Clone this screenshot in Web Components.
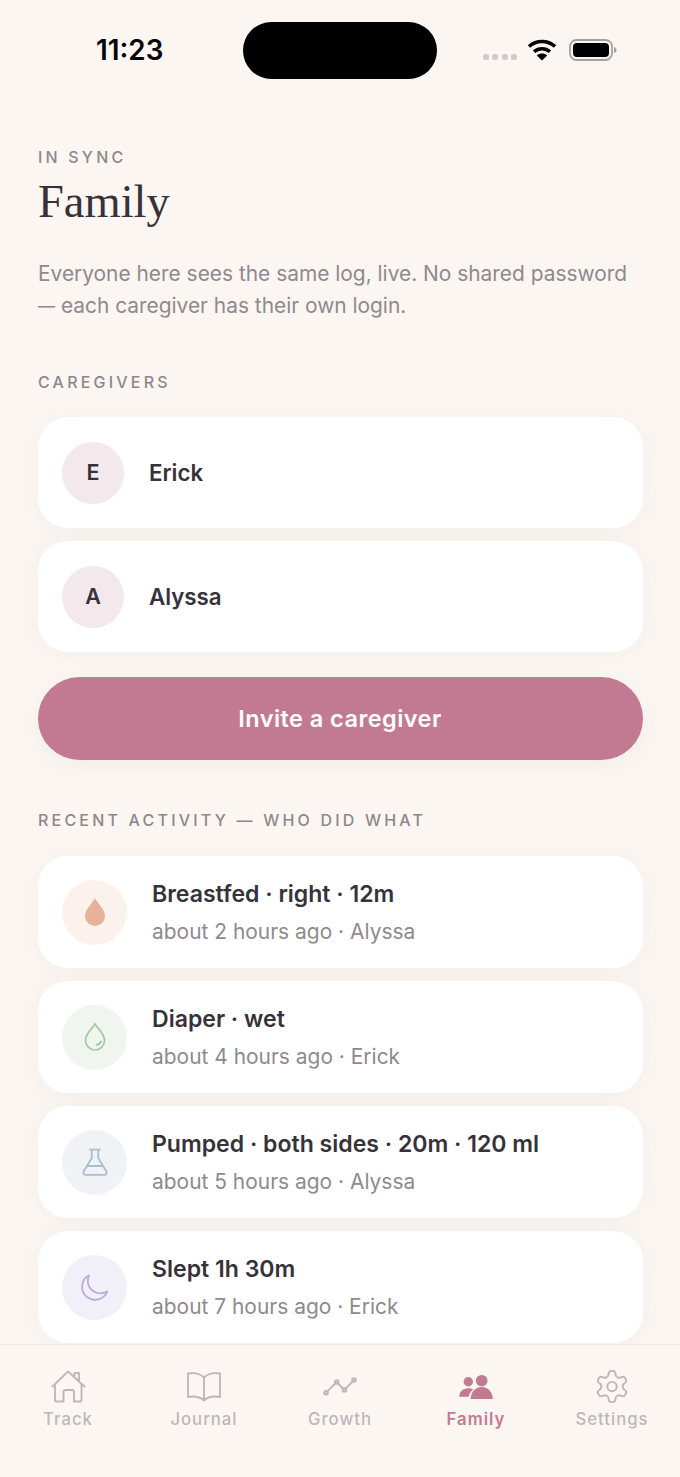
<!DOCTYPE html>
<html lang="en"><head><meta charset="utf-8"><title>Family</title>
<style>
html,body{margin:0;padding:0;background:#fbf6f2}
body{width:680px;height:1477px;overflow:hidden;font-family:Inter,"Liberation Sans",sans-serif;color:#37323a}
</style></head>
<body>
<x-app>
  <x-status slot="status"></x-status>
  <x-label>IN SYNC</x-label>
  <x-title>Family</x-title>
  <x-para>Everyone here sees the same log, live. No shared password <span style="font-size:17px;vertical-align:1.500px;line-height:1">—</span> each caregiver has their own login.</x-para>
  <x-label style="margin-top:50px">CAREGIVERS</x-label>
  <x-stack style="margin-top:25px">
    <x-caregiver initial="E">Erick</x-caregiver>
    <x-caregiver initial="A">Alyssa</x-caregiver>
  </x-stack>
  <x-button>Invite a caregiver</x-button>
  <x-label style="margin-top:50px">RECENT ACTIVITY — WHO DID WHAT</x-label>
  <x-stack style="margin-top:26px">
    <x-activity kind="feed" sub="about 2 hours ago · Alyssa">Breastfed · right · 12m</x-activity>
    <x-activity kind="diaper" sub="about 4 hours ago · Erick">Diaper · wet</x-activity>
    <x-activity kind="pump" sub="about 5 hours ago · Alyssa">Pumped · both sides · 20m · 120 ml</x-activity>
    <x-activity kind="sleep" sub="about 7 hours ago · Erick">Slept 1h 30m</x-activity>
  </x-stack>
  <x-tabs slot="tabs">
    <x-tab icon="home">Track</x-tab>
    <x-tab icon="book">Journal</x-tab>
    <x-tab icon="growth">Growth</x-tab>
    <x-tab icon="family" active>Family</x-tab>
    <x-tab icon="gear">Settings</x-tab>
  </x-tabs>
</x-app>
<script>
function def(name, html, init){
  customElements.define(name, class extends HTMLElement{
    constructor(){super();this.attachShadow({mode:'open'}).innerHTML=html;}
    connectedCallback(){ if(init) init.call(this,this.shadowRoot); }
  });
}
def('x-app',`<style>
:host{display:flex;flex-direction:column;width:680px;height:1477px;overflow:hidden}
.main{flex:1;min-height:0;overflow:hidden;padding:47px 37.5px 0;display:flex;flex-direction:column;box-sizing:border-box}
</style><slot name="status"></slot><div class="main"><slot></slot></div><slot name="tabs"></slot>`);
def('x-status',`<style>
:host{display:flex;align-items:center;height:100px;padding:0 63px 0 96px;box-sizing:border-box;flex:none}
.t{font:600 27.800px/1 Inter,"Liberation Sans",sans-serif;color:#050505;width:147px;margin-top:1px}
.i{width:194px;height:57px;background:#000;border-radius:29px;flex:none;margin-left:1px}
.r{display:flex;align-items:center;margin-left:46px}
.d{display:flex;gap:3.500px;margin-top:13px;margin-right:10px}
.d i{width:6px;height:6px;border-radius:2px;background:#cfcbc8;display:block}
svg{display:block}
</style><div class="t">11:23</div><div class="i"></div>
<div class="r"><div class="d"><i></i><i></i><i></i><i></i></div>
<svg width="30" height="22" viewBox="0 0 30 22"><path d="M2 7.500C9.500 .8 20.500 .8 28 7.500" fill="none" stroke="#000" stroke-width="3.600"/><path d="M7 12.600C11.500 8.700 18.500 8.700 23 12.600" fill="none" stroke="#000" stroke-width="3.400"/><path d="M15 21.500 9.800 16.400C12.800 13.800 17.200 13.800 20.200 16.400Z" fill="#000"/></svg>
<svg style="margin-left:12px" width="48" height="24" viewBox="0 0 48 24"><rect x="1" y="2" width="42" height="20" rx="6.500" fill="none" stroke="#a5a19e" stroke-width="1.800"/><rect x="4" y="5" width="36" height="14" rx="4" fill="#000"/><path d="M45 9c2 .5 2.500 1.500 2.500 3s-.5 2.500-2.500 3z" fill="#a5a19e"/></svg>
</div>`);
def('x-label',`<style>:host{display:block;font:500 16px/20px Inter,"Liberation Sans",sans-serif;letter-spacing:3.200px;color:#8d878c;flex:none;padding-left:.5px}</style><slot></slot>`);
def('x-title',`<style>:host{display:block;font:400 46.500px/56px "Liberation Serif",serif;color:#37323a;margin-top:7px;flex:none;padding-left:.5px}</style><slot></slot>`);
def('x-para',`<style>:host{display:block;font:400 20.900px/32px Inter,"Liberation Sans",sans-serif;color:#8f898d;margin-top:28px;flex:none;width:600px;padding-left:.5px}</style><slot></slot>`);
def('x-stack',`<style>:host{display:flex;flex-direction:column;gap:13px;flex:none}</style><slot></slot>`);
const cardCss=`background:#fff;border-radius:30px;box-shadow:0 3px 24px rgba(120,90,70,.05);box-sizing:border-box;display:flex;align-items:center;flex:none;`;
def('x-caregiver',`<style>
:host{${cardCss}height:111px;padding:0 24.500px;gap:25px}
.a{width:62px;height:62px;border-radius:50%;background:#f3e8ec;display:flex;align-items:center;justify-content:center;font:600 21.500px/1 Inter,"Liberation Sans",sans-serif;color:#37323a;flex:none}
.n{font:600 22.300px/1 Inter,"Liberation Sans",sans-serif;color:#37323a;margin-top:1px}
</style><div class="a"></div><div class="n"><slot></slot></div>`,function(r){r.querySelector('.a').textContent=this.getAttribute('initial')});
def('x-button',`<style>
:host{display:flex;align-items:center;justify-content:center;height:83px;border-radius:42px;background:#c27a92;color:#fff;font:600 23.500px/1 Inter,"Liberation Sans",sans-serif;letter-spacing:.45px;margin-top:25px;flex:none;box-shadow:0 6px 22px rgba(120,90,70,.06)}
span{margin-top:1px}
</style><span><slot></slot></span>`);
const kinds={
 feed:['#fbf2ee','<path d="M17 3C20 9 27 14 27 21a10 10 0 0 1-20 0C7 14 14 9 17 3Z" fill="#e6b299"/>'],
 diaper:['#f0f5f0','<path d="M17 4C20 9 26.500 13.500 26.500 20.500a9.500 9.500 0 0 1-19 0C7.500 13.500 14 9 17 4Z" fill="none" stroke="#a5c6a4" stroke-width="1.700"/><path d="M18.500 25c2-.3 3.500-1.500 4.500-3.500" fill="none" stroke="#a5c6a4" stroke-width="1.700" stroke-linecap="round"/>'],
 pump:['#f0f2f6','<path d="M12 4.700h10M13.800 5v8L5.600 26.500c-.8 1.700.2 3.300 2 3.300h18.800c1.800 0 2.800-1.600 2-3.300L20.200 13V5M9.500 21h15" fill="none" stroke="#a8bcd2" stroke-width="1.800" stroke-linecap="round" stroke-linejoin="round"/>'],
 sleep:['#f1eff8','<path d="M11 5.300A13 13 0 1 0 29.300 21.300 12.600 12.600 0 0 1 11 5.300Z" fill="none" stroke="#bcaadb" stroke-width="1.800" stroke-linejoin="round"/>']
};
def('x-activity',`<style>
:host{${cardCss}height:112px;padding:0 24.500px;gap:25px}
.a{width:65px;height:65px;border-radius:50%;display:flex;align-items:center;justify-content:center;flex:none}
.c{padding-top:2px}
.t{font:600 23.050px/28px Inter,"Liberation Sans",sans-serif;color:#37323a;white-space:nowrap}
.s{font:400 20.950px/28px Inter,"Liberation Sans",sans-serif;color:#8f898d;margin-top:10px;white-space:nowrap}
svg{display:block}
</style><div class="a"><svg width="34" height="34" viewBox="0 0 34 34"></svg></div><div class="c"><div class="t"><slot></slot></div><div class="s"></div></div>`,function(r){
 const k=kinds[this.getAttribute('kind')];r.querySelector('.a').style.background=k[0];r.querySelector('svg').innerHTML=k[1];r.querySelector('.s').textContent=this.getAttribute('sub');});
def('x-tabs',`<style>
:host{display:grid;grid-template-columns:repeat(5,1fr);height:133px;border-top:1px solid #efe9e5;background:#fbf6f2;flex:none;box-sizing:border-box;padding-top:25px;align-items:start;position:relative;z-index:1}
</style><slot></slot>`);
const tabIcons={
 home:'<path d="M2.500 16.500 18 1.500l16.500 15M5 14v16.500a1 1 0 0 0 1 1h7.500V22a2 2 0 0 1 2-2h6.500a2 2 0 0 1 2 2v9.500h6.500a1 1 0 0 0 1-1V14M24.500 6.500V3h4.500v9"/>',
 book:'<path d="M18 7.500C14 3.500 8 2.500 2 3.500V27c6-1 12-.2 16 3.500 4-3.700 10-4.500 16-3.500V3.500C28 2.500 22 3.500 18 7.500ZM18 7.500V30.500"/>',
 growth:'<path d="M4 22.700 14.700 12 22.300 20 32 10"/><circle cx="4" cy="22.700" r="1.800" fill="#d5cfd2"/><circle cx="14.700" cy="12" r="1.800" fill="#d5cfd2"/><circle cx="22.300" cy="20" r="1.800" fill="#d5cfd2"/><circle cx="32" cy="10" r="1.800" fill="#d5cfd2"/>',
 family:'<g fill="#c27a92" stroke="none"><circle cx="10.300" cy="11.700" r="4.700"/><circle cx="23.700" cy="10.700" r="5.800"/><path d="M1.300 26.700c0-5 3.500-8.500 9-8.500 2 0 3.500.3 5 1.200-2.500 2-4 4.300-4.800 7.300Z"/><path d="M12.700 29c0-7 4.500-12 11-12s11 5 11 12Z"/></g>',
 gear:'<g transform="translate(-.7 -2.200) scale(1.560)" stroke-width="1.220"><path d="M12.220 2h-.44a2 2 0 0 0-2 2v.18a2 2 0 0 1-1 1.730l-.43.250a2 2 0 0 1-2 0l-.15-.08a2 2 0 0 0-2.730.730l-.22.380a2 2 0 0 0 .73 2.730l.15.100a2 2 0 0 1 1 1.720v.510a2 2 0 0 1-1 1.740l-.15.090a2 2 0 0 0-.73 2.730l.22.380a2 2 0 0 0 2.730.730l.15-.08a2 2 0 0 1 2 0l.43.250a2 2 0 0 1 1 1.730V20a2 2 0 0 0 2 2h.44a2 2 0 0 0 2-2v-.18a2 2 0 0 1 1-1.730l.43-.25a2 2 0 0 1 2 0l.15.08a2 2 0 0 0 2.730-.73l.22-.39a2 2 0 0 0-.73-2.730l-.15-.08a2 2 0 0 1-1-1.740v-.5a2 2 0 0 1 1-1.740l.15-.09a2 2 0 0 0 .73-2.730l-.22-.38a2 2 0 0 0-2.730-.73l-.15.08a2 2 0 0 1-2 0l-.43-.25a2 2 0 0 1-1-1.730V4a2 2 0 0 0-2-2Z"/><circle cx="12" cy="12" r="3"/></g>'
};
def('x-tab',`<style>
:host{display:flex;flex-direction:column;align-items:center;font:500 16.700px/20px Inter,"Liberation Sans",sans-serif;letter-spacing:1px;color:#bdb7bb}
:host([active]){color:#c27a92;font-weight:600}
svg{display:block;margin-bottom:3px;fill:none;stroke:#bdb7bb;stroke-width:1.900;stroke-linejoin:round;stroke-linecap:round}
</style><svg width="36" height="36" viewBox="0 0 36 36"></svg><slot></slot>`,function(r){r.querySelector('svg').innerHTML=tabIcons[this.getAttribute('icon')]});
</script>
</body></html>
